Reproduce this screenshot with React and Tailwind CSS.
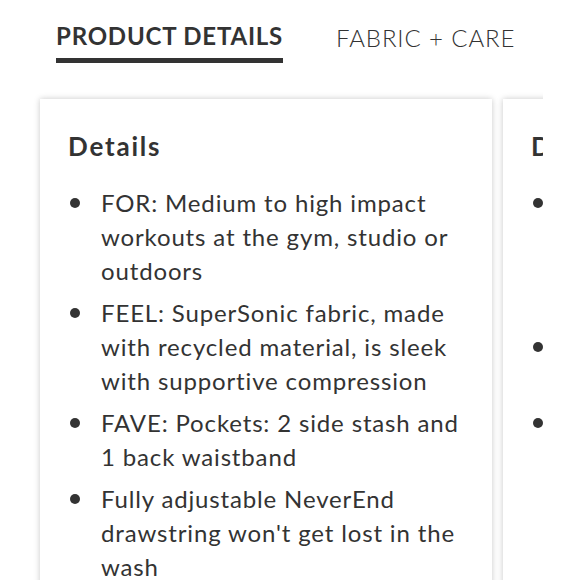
import React from "react";

const cards = [
  {
    title: "Details",
    items: [
      "FOR: Medium to high impact workouts at the gym, studio or outdoors",
      "FEEL: SuperSonic fabric, made with recycled material, is sleek with supportive compression",
      "FAVE: Pockets: 2 side stash and 1 back waistband",
      "Fully adjustable NeverEnd drawstring won't get lost in the wash",
    ],
  },
  {
    title: "Design",
    items: [
      "Lined with a breathable mesh brief that keeps you covered and comfortable through every squat, lunge, sprint and stretch",
      "Split hem gives you room to move freely",
      "Reflective details for low light runs",
    ],
  },
];

function Card({ card }) {
  return (
    <div className="w-[452px] shrink-0 bg-white pt-[31px] pl-[28px] pr-[28px] pb-6 shadow-[0_0_6px_rgba(0,0,0,0.22)]">
      <h3 className="text-[26px] leading-[32px] font-bold tracking-[1.8px] text-[#333]">
        {card.title}
      </h3>
      <ul className="mt-[24px] flex flex-col gap-[8px]">
        {card.items.map((t, i) => (
          <li key={i} className="flex text-[24px] leading-[34px] tracking-[0.85px] text-[#333]">
            <span className="w-[33px] shrink-0 pt-[12px] pl-[2px]">
              <span className="block w-[10px] h-[10px] rounded-full bg-[#333]" />
            </span>
            <span className="flex-1">{t}</span>
          </li>
        ))}
      </ul>
    </div>
  );
}

export default function App() {
  return (
    <div
      className="w-[580px] h-[580px] bg-white overflow-hidden"
      style={{ fontFamily: "Lato, 'Noto Sans', sans-serif" }}
    >
      {/* Tabs */}
      <div className="flex pl-[56px] pt-[20px] gap-[53px]">
        <div>
          <div className="text-[24px] leading-[32px] font-bold tracking-[0.8px] text-[#333] whitespace-nowrap">
            PRODUCT DETAILS
          </div>
          <div className="mt-[6px] h-[5px] bg-[#333]" />
        </div>
        <div className="pt-[2px] text-[24px] leading-[32px] font-light tracking-[0.9px] text-[#333] whitespace-nowrap">
          FABRIC + CARE
        </div>
      </div>

      {/* Cards */}
      <div className="w-[543px] overflow-hidden pl-[40px] pt-[36px]">
        <div className="flex gap-[11px]">
          {cards.map((c, i) => (
            <Card key={i} card={c} />
          ))}
        </div>
      </div>
    </div>
  );
}
